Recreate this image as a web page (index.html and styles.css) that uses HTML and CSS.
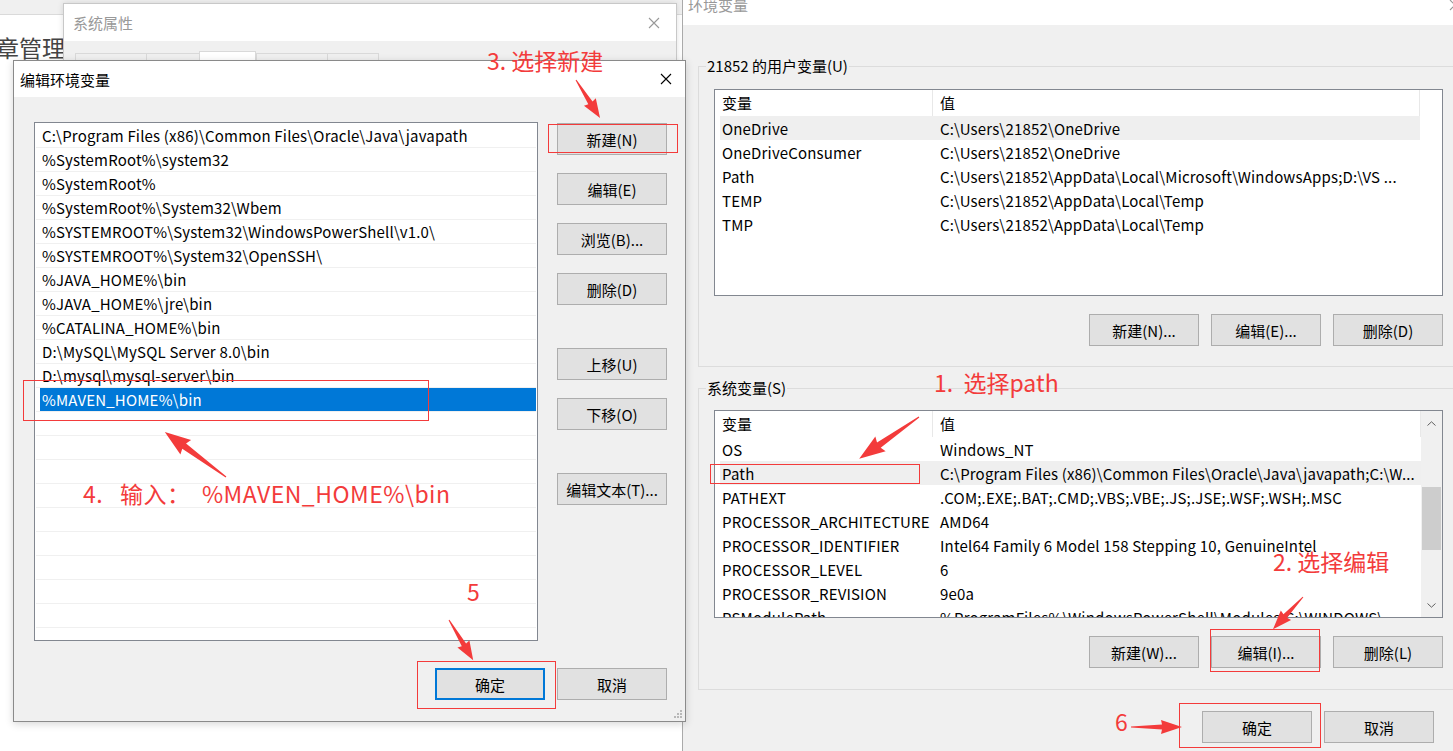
FILE: index.html
```html
<!DOCTYPE html>
<html>

<head>
     <title>编辑环境变量</title>
     <link rel="stylesheet" href="styles.css">
</head>

<body>
     <div class="desktop">
          <div class="backdrop">
               <div class="backdrop-bar"></div>
               <div class="backdrop-title">章管理</div>
          </div>

          <!-- 系统属性 (behind) -->
          <div class="window sysprops">
               <div class="titlebar faded">
                    <span>系统属性</span>
                    <svg class="close" width="12" height="12" viewBox="0 0 12 12"><path d="M1 1L11 11M11 1L1 11" stroke="currentColor" stroke-width="1.1" fill="none"/></svg>
               </div>
               <div class="tabs">
                    <div class="tab" style="width:71px">计算机名</div>
                    <div class="tab" style="width:53px">硬件</div>
                    <div class="tab active" style="width:57px">高级</div>
                    <div class="tab" style="width:71px">系统保护</div>
                    <div class="tab" style="width:52px">远程</div>
               </div>
          </div>

          <!-- 环境变量 -->
          <div class="window envwin">
               <div class="titlebar faded">
                    <span>环境变量</span>
                    <svg class="close" width="12" height="12" viewBox="0 0 12 12"><path d="M1 1L11 11M11 1L1 11" stroke="currentColor" stroke-width="1.1" fill="none"/></svg>
               </div>
               <div class="envbody">
                    <fieldset class="group first">
                         <legend>21852 的用户变量(U)</legend>
                         <div class="group-body">
                              <div class="listview user">
                                   <div class="lv-table">
                                        <div class="lv-head"><span class="c1">变量</span><span class="c2">值</span></div>
                                        <div class="lv-row hot"><span class="c1">OneDrive</span><span class="c2">C:\Users\21852\OneDrive</span></div>
                                        <div class="lv-row"><span class="c1">OneDriveConsumer</span><span class="c2">C:\Users\21852\OneDrive</span></div>
                                        <div class="lv-row"><span class="c1">Path</span><span class="c2">C:\Users\21852\AppData\Local\Microsoft\WindowsApps;D:\VS ...</span></div>
                                        <div class="lv-row"><span class="c1">TEMP</span><span class="c2">C:\Users\21852\AppData\Local\Temp</span></div>
                                        <div class="lv-row"><span class="c1">TMP</span><span class="c2">C:\Users\21852\AppData\Local\Temp</span></div>
                                   </div>
                                   <div class="lv-gutter"></div>
                              </div>
                              <div class="btnrow">
                                   <button class="button">新建(N)...</button>
                                   <button class="button">编辑(E)...</button>
                                   <button class="button">删除(D)</button>
                              </div>
                         </div>
                    </fieldset>

                    <fieldset class="group second">
                         <legend>系统变量(S)</legend>
                         <div class="group-body">
                              <div class="listview sys">
                                   <div class="lv-table">
                                        <div class="lv-head"><span class="c1">变量</span><span class="c2">值</span></div>
                                        <div class="lv-row"><span class="c1">OS</span><span class="c2">Windows_NT</span></div>
                                        <div class="lv-row hot"><span class="c1">Path</span><span class="c2">C:\Program Files (x86)\Common Files\Oracle\Java\javapath;C:\W...</span></div>
                                        <div class="lv-row"><span class="c1">PATHEXT</span><span class="c2">.COM;.EXE;.BAT;.CMD;.VBS;.VBE;.JS;.JSE;.WSF;.WSH;.MSC</span></div>
                                        <div class="lv-row"><span class="c1">PROCESSOR_ARCHITECTURE</span><span class="c2">AMD64</span></div>
                                        <div class="lv-row"><span class="c1">PROCESSOR_IDENTIFIER</span><span class="c2">Intel64 Family 6 Model 158 Stepping 10, GenuineIntel</span></div>
                                        <div class="lv-row"><span class="c1">PROCESSOR_LEVEL</span><span class="c2">6</span></div>
                                        <div class="lv-row"><span class="c1">PROCESSOR_REVISION</span><span class="c2">9e0a</span></div>
                                        <div class="lv-row"><span class="c1">PSModulePath</span><span class="c2">%ProgramFiles%\WindowsPowerShell\Modules;C:\WINDOWS\...</span></div>
                                   </div>
                                   <div class="vscroll">
                                        <div class="sb-btn"><svg width="9" height="5" viewBox="0 0 9 5"><path d="M0.5 4.5L4.5 0.8L8.5 4.5" stroke="#606060" fill="none"/></svg></div>
                                        <div class="sb-track"><div class="sb-thumb"></div></div>
                                        <div class="sb-btn"><svg width="9" height="5" viewBox="0 0 9 5"><path d="M0.5 0.5L4.5 4.2L8.5 0.5" stroke="#606060" fill="none"/></svg></div>
                                   </div>
                              </div>
                              <div class="btnrow">
                                   <button class="button">新建(W)...</button>
                                   <button class="button">编辑(I)...</button>
                                   <button class="button">删除(L)</button>
                              </div>
                         </div>
                    </fieldset>

                    <div class="btnrow footer">
                         <button class="button">确定</button>
                         <button class="button">取消</button>
                    </div>
               </div>
          </div>

          <!-- 编辑环境变量 -->
          <div class="window editdlg">
               <div class="titlebar">
                    <span>编辑环境变量</span>
                    <svg class="close" width="12" height="12" viewBox="0 0 12 12"><path d="M1 1L11 11M11 1L1 11" stroke="currentColor" stroke-width="1.1" fill="none"/></svg>
               </div>
               <div class="dlg-body">
                    <div class="dlg-main">
                         <div class="pathlist">
                              <div class="path-row">C:\Program Files (x86)\Common Files\Oracle\Java\javapath</div>
                              <div class="path-row">%SystemRoot%\system32</div>
                              <div class="path-row">%SystemRoot%</div>
                              <div class="path-row">%SystemRoot%\System32\Wbem</div>
                              <div class="path-row">%SYSTEMROOT%\System32\WindowsPowerShell\v1.0\</div>
                              <div class="path-row">%SYSTEMROOT%\System32\OpenSSH\</div>
                              <div class="path-row">%JAVA_HOME%\bin</div>
                              <div class="path-row">%JAVA_HOME%\jre\bin</div>
                              <div class="path-row">%CATALINA_HOME%\bin</div>
                              <div class="path-row">D:\MySQL\MySQL Server 8.0\bin</div>
                              <div class="path-row">D:\mysql\mysql-server\bin</div>
                              <div class="path-row selected">%MAVEN_HOME%\bin</div>
                              <div class="path-row"></div>
                              <div class="path-row"></div>
                              <div class="path-row"></div>
                              <div class="path-row"></div>
                              <div class="path-row"></div>
                              <div class="path-row"></div>
                              <div class="path-row"></div>
                              <div class="path-row"></div>
                              <div class="path-row"></div>
                              <div class="path-row"></div>
                         </div>
                         <div class="sidebtns">
                              <button class="button">新建(N)</button>
                              <button class="button">编辑(E)</button>
                              <button class="button">浏览(B)...</button>
                              <button class="button">删除(D)</button>
                              <button class="button spaced">上移(U)</button>
                              <button class="button">下移(O)</button>
                              <button class="button spaced">编辑文本(T)...</button>
                         </div>
                    </div>
                    <div class="btnrow dlg-footer">
                         <button class="button default">确定</button>
                         <button class="button">取消</button>
                    </div>
               </div>
               <svg class="grip" width="9" height="9" viewBox="0 0 9 9">
                    <rect x="6" y="0" width="2" height="2" fill="#b8b8b8"/>
                    <rect x="3" y="3" width="2" height="2" fill="#b8b8b8"/>
                    <rect x="6" y="3" width="2" height="2" fill="#b8b8b8"/>
                    <rect x="0" y="6" width="2" height="2" fill="#b8b8b8"/>
                    <rect x="3" y="6" width="2" height="2" fill="#b8b8b8"/>
                    <rect x="6" y="6" width="2" height="2" fill="#b8b8b8"/>
               </svg>
          </div>

          <!-- annotations -->
          <svg class="marks" width="1453" height="751" viewBox="0 0 1453 751">
               <g fill="none" stroke="#f33b3b" stroke-width="1">
                    <rect x="548.5" y="124.5" width="129" height="28"/>
                    <rect x="23.5" y="380.5" width="405" height="40"/>
                    <rect x="417.5" y="661.5" width="138" height="47"/>
                    <rect x="710.5" y="464.5" width="209" height="19"/>
                    <rect x="1210.5" y="629.5" width="109" height="42"/>
                    <rect x="1179.5" y="703.5" width="141" height="44"/>
               </g>
               <g fill="#f33b3b">
                    <polygon transform="translate(576 80) rotate(57.7)" points="0,-0.5 27,-2.5 26,-7 45,0 26,7 27,2.5 0,0.5"/>
                    <polygon transform="translate(226 477) rotate(216.4)" points="0,-0.6 52,-3.2 50,-9 76,0 50,9 52,3.2 0,0.6"/>
                    <polygon transform="translate(449 620) rotate(59)" points="0,-0.5 29,-2.5 28,-7 47,0 28,7 29,2.5 0,0.5"/>
                    <polygon transform="translate(919 417) rotate(145)" points="0,-0.6 49,-3.2 47,-9 73,0 47,9 49,3.2 0,0.6"/>
                    <polygon transform="translate(1303 597) rotate(133)" points="0,-0.5 26,-2.5 25,-7 44,0 25,7 26,2.5 0,0.5"/>
                    <polygon transform="translate(1131 727)" points="0,-0.5 31,-2.5 30,-7 51,0 30,7 31,2.5 0,0.5"/>
               </g>
          </svg>
          <div class="note n3">3. 选择新建</div>
          <div class="note n4">4.   输入：  %MAVEN_HOME%\bin</div>
          <div class="note n5">5</div>
          <div class="note n1">1.  选择path</div>
          <div class="note n2">2. 选择编辑</div>
          <div class="note n6">6</div>
     </div>
</body>

</html>
```

FILE: styles.css
```css
* {
     box-sizing: border-box;
}

body {
     margin: 0;
     background-color: #fff;
     font-family: "Microsoft YaHei", "Noto Sans CJK SC", sans-serif;
     font-size: 15px;
     color: #000;
}

.desktop {
     position: relative;
     width: 1453px;
     height: 751px;
     overflow: hidden;
     background-color: #fff;
}

/* app behind the windows */
.backdrop-bar {
     height: 15px;
     background-color: #f0f0f0;
     border-bottom: 1px solid #dadada;
}

.backdrop-title {
     margin: 19px 0 0 -4px;
     font-size: 23px;
     line-height: 26px;
     color: #444;
}

/* windows */
.window {
     position: absolute;
     display: flex;
     flex-direction: column;
     background-color: #f0f0f0;
     border: 1px solid #a0a0a0;
}

.titlebar {
     flex: none;
     height: 36px;
     display: flex;
     align-items: center;
     justify-content: space-between;
     background-color: #fff;
     padding: 0 13px 0 6px;
}

.titlebar.faded {
     color: #999;
}

.sysprops {
     left: 63px;
     top: 3px;
     width: 614px;
     height: 712px;
     border-color: #c8c8c8;
     box-shadow: 0 0 6px rgba(0, 0, 0, 0.12);
}

.sysprops .titlebar {
     height: 37px;
     padding: 0 16px 0 9px;
}

.tabs {
     display: flex;
     align-items: flex-end;
     margin-top: 10px;
     padding-left: 11px;
     height: 28px;
}

.tab {
     height: 26px;
     border: 1px solid #d9d9d9;
     border-bottom: none;
     border-right: none;
     background-color: #f0f0f0;
     text-align: center;
     line-height: 24px;
     font-size: 14px;
}

.tab:last-child {
     border-right: 1px solid #d9d9d9;
}

.tab.active {
     height: 28px;
     background-color: #fff;
     border-right: 1px solid #d9d9d9;
     padding-top: 2px;
}

.envwin {
     left: 682px;
     top: -12px;
     width: 792px;
     height: 775px;
     border-color: #aaa;
}

.envwin .titlebar {
     padding: 0 12px 5px 5px;
}

.envbody {
     display: flex;
     flex-direction: column;
     padding: 0 14px 0 15px;
}

.group {
     margin: 0;
     padding: 0 0 20px 0;
     border: 1px solid #dcdcdc;
     min-width: 0;
}

.group.first {
     margin-top: 31px;
}

.group.second {
     margin-top: 11px;
     padding-bottom: 21px;
}

.group legend {
     margin-left: 7px;
     padding: 0 1px;
     line-height: 20px;
}

.group-body {
     padding: 13px 15px 0 15px;
}

.group.second .group-body {
     padding-top: 12px;
}

.listview {
     display: flex;
     background-color: #fff;
     border: 1px solid #828790;
     overflow: hidden;
}

.listview.user {
     height: 207px;
}

.listview.sys {
     height: 208px;
}

.lv-table {
     flex: 1;
     min-width: 0;
     padding-left: 5px;
     overflow: hidden;
}

.lv-head,
.lv-row {
     display: flex;
     align-items: center;
     white-space: nowrap;
}

.lv-head {
     height: 26px;
}

.lv-row {
     height: 24px;
     letter-spacing: 0.17px;
}

.lv-row.hot {
     background-color: #efefef;
}

.c1 {
     flex: none;
     width: 213px;
     padding-left: 2px;
     overflow: hidden;
}

.c2 {
     flex: 1;
     min-width: 0;
     padding-left: 7px;
     overflow: hidden;
}

.lv-head .c1,
.lv-head .c2 {
     height: 26px;
     line-height: 26px;
     border-right: 1px solid #e8e8e8;
}

.lv-gutter {
     flex: none;
     width: 22px;
}

.vscroll {
     flex: none;
     width: 21px;
     display: flex;
     flex-direction: column;
     background-color: #f0f0f0;
}

.sb-btn {
     height: 24px;
     display: flex;
     align-items: center;
     justify-content: center;
}

.sb-track {
     flex: 1;
}

.sb-thumb {
     margin: 52px 1px 0 1px;
     height: 63px;
     background-color: #cdcdcd;
}

/* buttons */
.button {
     width: 110px;
     height: 32px;
     padding: 0;
     font-family: inherit;
     font-size: 15px;
     color: #000;
     background-color: #e1e1e1;
     border: 1px solid #adadad;
}

.button.default {
     border: 2px solid #0078d7;
}

.btnrow {
     display: flex;
     justify-content: flex-end;
     gap: 12px;
     margin-top: 18px;
}

.btnrow.footer {
     margin-top: 21px;
     padding-right: 25px;
}

/* edit dialog */
.editdlg {
     left: 13px;
     top: 60px;
     width: 673px;
     height: 662px;
     border-color: #8a8a8a;
     box-shadow: 0 2px 8px rgba(0, 0, 0, 0.16);
}

.dlg-body {
     display: flex;
     flex-direction: column;
     padding: 25px 18px 0 20px;
}

.dlg-main {
     display: flex;
     gap: 19px;
}

.pathlist {
     width: 504px;
     height: 519px;
     padding: 1px;
     background-color: #fff;
     border: 1px solid #828790;
     overflow: hidden;
}

.path-row {
     height: 24px;
     line-height: 23px;
     padding-left: 6px;
     border-bottom: 1px solid #f0f0f0;
     white-space: nowrap;
     letter-spacing: 0.18px;
}

.path-row.selected {
     color: #fff;
     background: linear-gradient(90deg, transparent 4px, #0078d7 4px);
}

.sidebtns {
     display: flex;
     flex-direction: column;
     gap: 18px;
     margin-top: 1px;
}

.sidebtns .spaced {
     margin-top: 25px;
}

.dlg-footer {
     margin-top: 27px;
}

.grip {
     position: absolute;
     right: 2px;
     bottom: 2px;
}

/* red annotations */
.marks {
     position: absolute;
     left: 0;
     top: 0;
     pointer-events: none;
}

.note {
     position: absolute;
     font-size: 23px;
     line-height: 24px;
     color: #f33b3b;
     white-space: pre;
}

.n3 { left: 487px; top: 48px; }
.n4 { left: 83px; top: 481px; letter-spacing: 0.5px; }
.n5 { left: 467px; top: 579px; }
.n1 { left: 934px; top: 370px; }
.n2 { left: 1273px; top: 549px; }
.n6 { left: 1115px; top: 709px; }
```
